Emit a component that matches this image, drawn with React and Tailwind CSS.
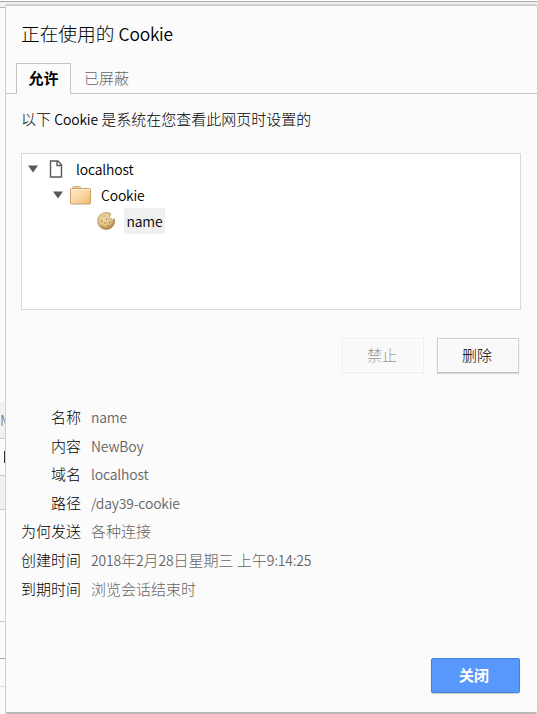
import React from 'react';

const details = [
  ['名称', 'name'],
  ['内容', 'NewBoy'],
  ['域名', 'localhost'],
  ['路径', '/day39-cookie'],
  ['为何发送', '各种连接'],
  ['创建时间', '2018年2月28日星期三 上午9:14:25'],
  ['到期时间', '浏览会话结束时'],
];

// Sets Latin runs slightly smaller and heavier than the Chinese text around them.
function Mixed({ children }) {
  return children.split(/([\x21-\x7e]+)/).map((part, i) =>
    i % 2 ? (
      <span key={i} className="text-[0.93em] font-[350] tracking-[-0.012em]">{part}</span>
    ) : (
      part
    ),
  );
}

function Arrow() {
  return (
    <svg className="h-2 w-[10px] shrink-0" viewBox="0 0 10 8">
      <path d="M0 .5h10L5 7.5z" fill="#5a5a5a" />
    </svg>
  );
}

function PageIcon() {
  return (
    <svg className="h-[18px] w-[14px] shrink-0" viewBox="0 0 14 18" fill="none" stroke="#5a5a5a" strokeWidth="1.4">
      <path d="M1.500 1H9l3.500 3.700V17h-11z" />
      <path d="M8 1v4.500h4.500" />
    </svg>
  );
}

function FolderIcon() {
  return (
    <svg className="h-[19px] w-[21px] shrink-0" viewBox="0 0 21 19">
      <defs>
        <linearGradient id="folder" x1="0" y1="0" x2="1" y2="1">
          <stop offset="0" stopColor="#fdebcb" />
          <stop offset=".5" stopColor="#fbd7a2" />
          <stop offset="1" stopColor="#efb56d" />
        </linearGradient>
      </defs>
      <path d="M2.500 3V1.500q0-1 1-1h6q1 0 1 1V3z" fill="#f5d6a3" stroke="#cfae7c" />
      <rect x=".5" y="2.500" width="20" height="15.500" rx="1" fill="url(#folder)" stroke="#cba06a" />
      <path d="M1.500 3.500h18" stroke="#fff0d0" />
    </svg>
  );
}

function CookieIcon() {
  return (
    <svg className="h-[18px] w-[19px] shrink-0" viewBox="0 0 19 18">
      <defs>
        <radialGradient id="cookie" cx=".42" cy=".35" r=".65">
          <stop offset="0" stopColor="#f0dcab" />
          <stop offset=".65" stopColor="#dfc082" />
          <stop offset="1" stopColor="#a67e42" />
        </radialGradient>
      </defs>
      <path
        d="M14.300 2C12.900.9 11.100.4 9.200.4 4.400.4.6 4.200.6 9s3.800 8.500 8.600 8.500c4.700 0 8.500-3.700 8.500-8.400 0-.9-.1-1.700-.4-2.500-.5.900-1.400 1.300-2.300 1-.6-.2-.8-.7-.8-1.200-1 0-1.700-.5-1.700-1.500 0-.5.200-.9.700-1.300-.2-.8.300-1.500 1.100-1.600z"
        fill="url(#cookie)"
        stroke="#a98249"
        strokeWidth=".6"
      />
      <g fill="#8a6632">
        <circle cx="7" cy="4" r=".6" />
        <circle cx="9.500" cy="7" r=".7" />
        <circle cx="5" cy="9" r=".7" />
        <circle cx="8" cy="11" r=".7" />
        <circle cx="12.500" cy="10.500" r=".7" />
        <circle cx="6" cy="14" r=".6" />
        <circle cx="11" cy="14" r=".7" />
      </g>
    </svg>
  );
}

function Backdrop() {
  return (
    <div className="flex w-[5px] shrink-0 flex-col overflow-hidden bg-[#fbfbfb] text-[15px] text-[#666]">
      <div className="h-[2px] border-b border-[#a8aaa8]" />
      <div className="h-[6px] border-b border-[#b5b5b5] bg-[#f1f1f1]" />
      <div className="h-[394px]" />
      <div className="border-b border-[#ccc] bg-[#f1f1f1] leading-[36px]">M</div>
      <div className="flex h-[37px] items-center border-b border-[#ccc] pl-1">
        <span className="h-3 w-px bg-[#333]" />
      </div>
      <div className="h-[34px] border-b border-[#ccc] bg-[#f1f1f1]" />
      <div className="h-[112px] border-b border-[#ccc]" />
      <div className="h-[37px] border-b border-[#aaa]" />
      <div className="h-[28px] border-b border-[#ddd]" />
    </div>
  );
}

export default function App() {
  return (
    <div className="flex h-[714px] w-[538px] overflow-hidden bg-[#f1f1f1] font-['Noto_Sans_CJK_SC',sans-serif] text-[15px] font-light text-black">
      <Backdrop />
      <div className="flex w-[533px] shrink-0 flex-col">
        <div className="h-[2px] shrink-0 border-b border-[#a8aaa8] bg-white" />
        <main className="mt-[2px] flex h-[710px] shrink-0 flex-col rounded-[3px] border border-y-2 border-[#cfcfcf] border-b-[#b8b8b8] bg-[#fbfbfb]">
          <h1 className="h-[57px] shrink-0 pl-[15px] text-[18.7px] leading-[53px]"><Mixed>正在使用的 Cookie</Mixed></h1>
          <div className="flex h-[31px] shrink-0">
            <div className="w-[10px] border-b border-[#c3c3c3]" />
            <div className="w-[55px] border border-b-0 border-[#c3c3c3] text-center font-bold leading-[28px]">允许</div>
            <div className="flex-1 border-b border-[#c3c3c3] pl-[13px] leading-[29px] text-[#666]">已屏蔽</div>
          </div>
          <p className="h-[59px] shrink-0 pl-[15px] leading-[49px]"><Mixed>以下 Cookie 是系统在您查看此网页时设置的</Mixed></p>
          <div className="ml-[15px] h-[157px] w-[500px] shrink-0 border border-[#d9d9d9] bg-white pt-[2px] leading-[26px]">
            <div className="flex h-[26px] items-center pl-[6px]">
              <Arrow />
              <span className="ml-[11px] flex"><PageIcon /></span>
              <span className="ml-[13px]"><Mixed>localhost</Mixed></span>
            </div>
            <div className="flex h-[26px] items-center pl-[31px]">
              <Arrow />
              <span className="ml-[7px] flex"><FolderIcon /></span>
              <span className="ml-[10px]"><Mixed>Cookie</Mixed></span>
            </div>
            <div className="flex h-[26px] items-center pl-[75px]">
              <CookieIcon />
              <span className="ml-2 w-[41px] bg-[#f0f0f0] text-center"><Mixed>name</Mixed></span>
            </div>
          </div>
          <div className="mt-[28px] flex h-[36px] shrink-0 gap-[13px] pl-[336px]">
            <button className="h-[35px] w-[82px] border border-[#eee] bg-[#f9f9f9] pr-[2px] text-[#999] shadow-[inset_0_0_0_1px_#fff]">禁止</button>
            <button className="h-[35px] w-[82px] border border-[#ccc] border-b-[#bbb] bg-[#f9f9f9] pr-[2px] shadow-[inset_0_0_0_1px_#fff,0_1px_1px_#ddd]">删除</button>
          </div>
          <dl className="mt-[28px] grid h-[252px] shrink-0 auto-rows-[28.6px] grid-cols-[75px_1fr] content-start gap-x-[10px] leading-[29px]">
            {details.map(([label, value]) => (
              <React.Fragment key={label}>
                <dt className="text-right">{label}</dt>
                <dd className="whitespace-nowrap text-[#666]"><Mixed>{value}</Mixed></dd>
              </React.Fragment>
            ))}
          </dl>
          <button className="ml-[425px] mt-1 h-[35px] w-[89px] shrink-0 rounded-[2px] border border-[#4083e8] bg-[#5897fb] pr-[3px] font-bold text-white shadow-[0_1px_1px_#ccc]">关闭</button>
        </main>
      </div>
    </div>
  );
}
